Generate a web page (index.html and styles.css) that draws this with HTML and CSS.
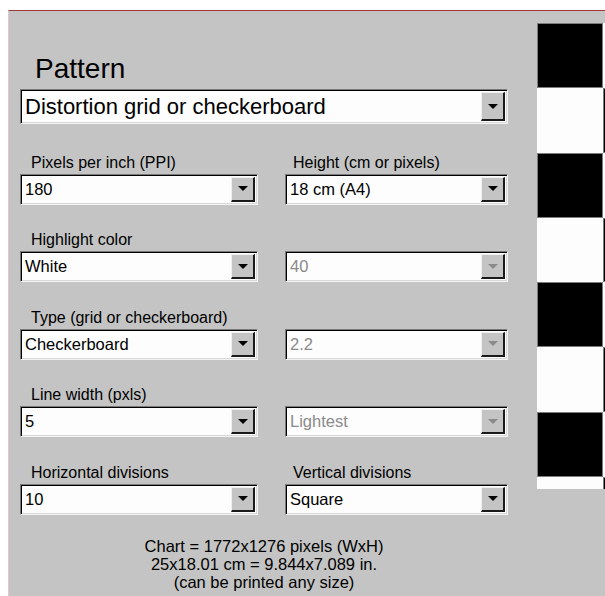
FILE: index.html
```html
<!DOCTYPE html>
<html lang="en">

<head>
    <meta charset="UTF-8">
    <meta name="viewport" content="width=device-width, initial-scale=1.0">
    <title>Chart settings</title>
    <link rel="stylesheet" href="styles.css">
</head>

<body>

    <div class="window">

        <div class="form">
            <div class="heading">Pattern</div>
            <div class="combo combo-big">
                <span class="value">Distortion grid or checkerboard</span>
                <span class="btn"></span>
            </div>

            <div class="fields">
                <div class="field">
                    <div class="label">Pixels per inch (PPI)</div>
                    <div class="combo"><span class="value">180</span><span class="btn"></span></div>
                </div>
                <div class="field right">
                    <div class="label">Height (cm or pixels)</div>
                    <div class="combo"><span class="value">18 cm (A4)</span><span class="btn"></span></div>
                </div>

                <div class="field">
                    <div class="label">Highlight color</div>
                    <div class="combo"><span class="value">White</span><span class="btn"></span></div>
                </div>
                <div class="field right">
                    <div class="label"></div>
                    <div class="combo disabled"><span class="value">40</span><span class="btn"></span></div>
                </div>

                <div class="field">
                    <div class="label">Type (grid or checkerboard)</div>
                    <div class="combo"><span class="value">Checkerboard</span><span class="btn"></span></div>
                </div>
                <div class="field right">
                    <div class="label"></div>
                    <div class="combo disabled"><span class="value">2.2</span><span class="btn"></span></div>
                </div>

                <div class="field">
                    <div class="label">Line width (pxls)</div>
                    <div class="combo"><span class="value">5</span><span class="btn"></span></div>
                </div>
                <div class="field right">
                    <div class="label"></div>
                    <div class="combo disabled"><span class="value">Lightest</span><span class="btn"></span></div>
                </div>

                <div class="field">
                    <div class="label">Horizontal divisions</div>
                    <div class="combo"><span class="value">10</span><span class="btn"></span></div>
                </div>
                <div class="field right">
                    <div class="label">Vertical divisions</div>
                    <div class="combo"><span class="value">Square</span><span class="btn"></span></div>
                </div>
            </div>

            <div class="summary">
                Chart = 1772x1276 pixels (WxH)<br>
                25x18.01 cm = 9.844x7.089 in.<br>
                (can be printed any size)
            </div>
        </div>

        <div class="chart">
            <div class="sq black"></div><div class="sq white"></div>
            <div class="sq white"></div><div class="sq black"></div>
            <div class="sq black"></div><div class="sq white"></div>
            <div class="sq white"></div><div class="sq black"></div>
            <div class="sq black"></div><div class="sq white"></div>
            <div class="sq white"></div><div class="sq black"></div>
            <div class="sq black"></div><div class="sq white"></div>
            <div class="sq white"></div><div class="sq black"></div>
        </div>

    </div>

</body>

</html>
```

FILE: styles.css
```css
html, body {
    height: 100%;
}

body {
    margin: 0;
    background-color: #ffffff;
    font-family: "Liberation Sans", Arial, sans-serif;
    color: #000;
}

.window {
    box-sizing: border-box;
    height: calc(100% - 10px);
    margin: 10px 0 0 8px;
    border-top: 1px solid #a03838;
    border-left: 1px solid #e6c6c8;
    background-color: #c4c4c4;
    display: flex;
    overflow: hidden;
}

.form {
    width: 488px;
    padding: 0 29px 0 11px;
    flex-shrink: 0;
}

.heading {
    font-size: 28px;
    line-height: 32px;
    padding: 42px 0 0 15px;
    height: 36px;
}

/* sunken windows style combo box */
.combo {
    box-sizing: border-box;
    height: 31px;
    display: flex;
    align-items: center;
    background-color: #fdfdfd;
    border-top: 1px solid #7a7a7a;
    border-left: 1px solid #7a7a7a;
    border-bottom: 1px solid #f4f4f4;
    border-right: 1px solid #f4f4f4;
    box-shadow: inset 1px 1px 0 #000, inset -1px -1px 0 #d8d8d8;
    font-size: 16.5px;
}

.combo-big {
    height: 35px;
    font-size: 22px;
}

.combo .value {
    flex: 1;
    padding-left: 4px;
    white-space: nowrap;
}

.combo .btn {
    box-sizing: border-box;
    width: 24px;
    height: calc(100% - 4px);
    margin-right: 2px;
    background-color: #c4c4c4;
    border-top: 1px solid #efefef;
    border-left: 1px solid #efefef;
    border-bottom: 2px solid #1a1a1a;
    border-right: 2px solid #1a1a1a;
    display: flex;
    align-items: center;
    justify-content: center;
}

.combo .btn::after {
    content: "";
    border-left: 5px solid transparent;
    border-right: 5px solid transparent;
    border-top: 5px solid #000;
}

.combo.disabled .value {
    color: #8a8a8a;
}

.combo.disabled .btn::after {
    border-top-color: #8a8a8a;
}

.fields {
    display: grid;
    grid-template-columns: 238px 223px;
    column-gap: 27px;
    padding-top: 3px;
}

.field .label {
    height: 22px;
    line-height: 22px;
    margin-top: 24.5px;
    font-size: 16px;
    padding-left: 11px;
}

.field.right .label {
    padding-left: 8px;
}

.summary {
    margin-top: 22px;
    text-align: center;
    font-size: 16.5px;
    line-height: 18px;
}

.chart {
    margin-top: 12px;
    width: 68px;
    height: 466px;
    overflow: hidden;
    display: grid;
    grid-template-columns: 66px 66px;
    grid-auto-rows: 64.86px;
    flex-shrink: 0;
}

.sq.black {
    background-color: #000;
    box-shadow: inset 0 0 0 1px #7c7c7c;
}

.sq.white {
    background-color: #fdfdfd;
}
```
